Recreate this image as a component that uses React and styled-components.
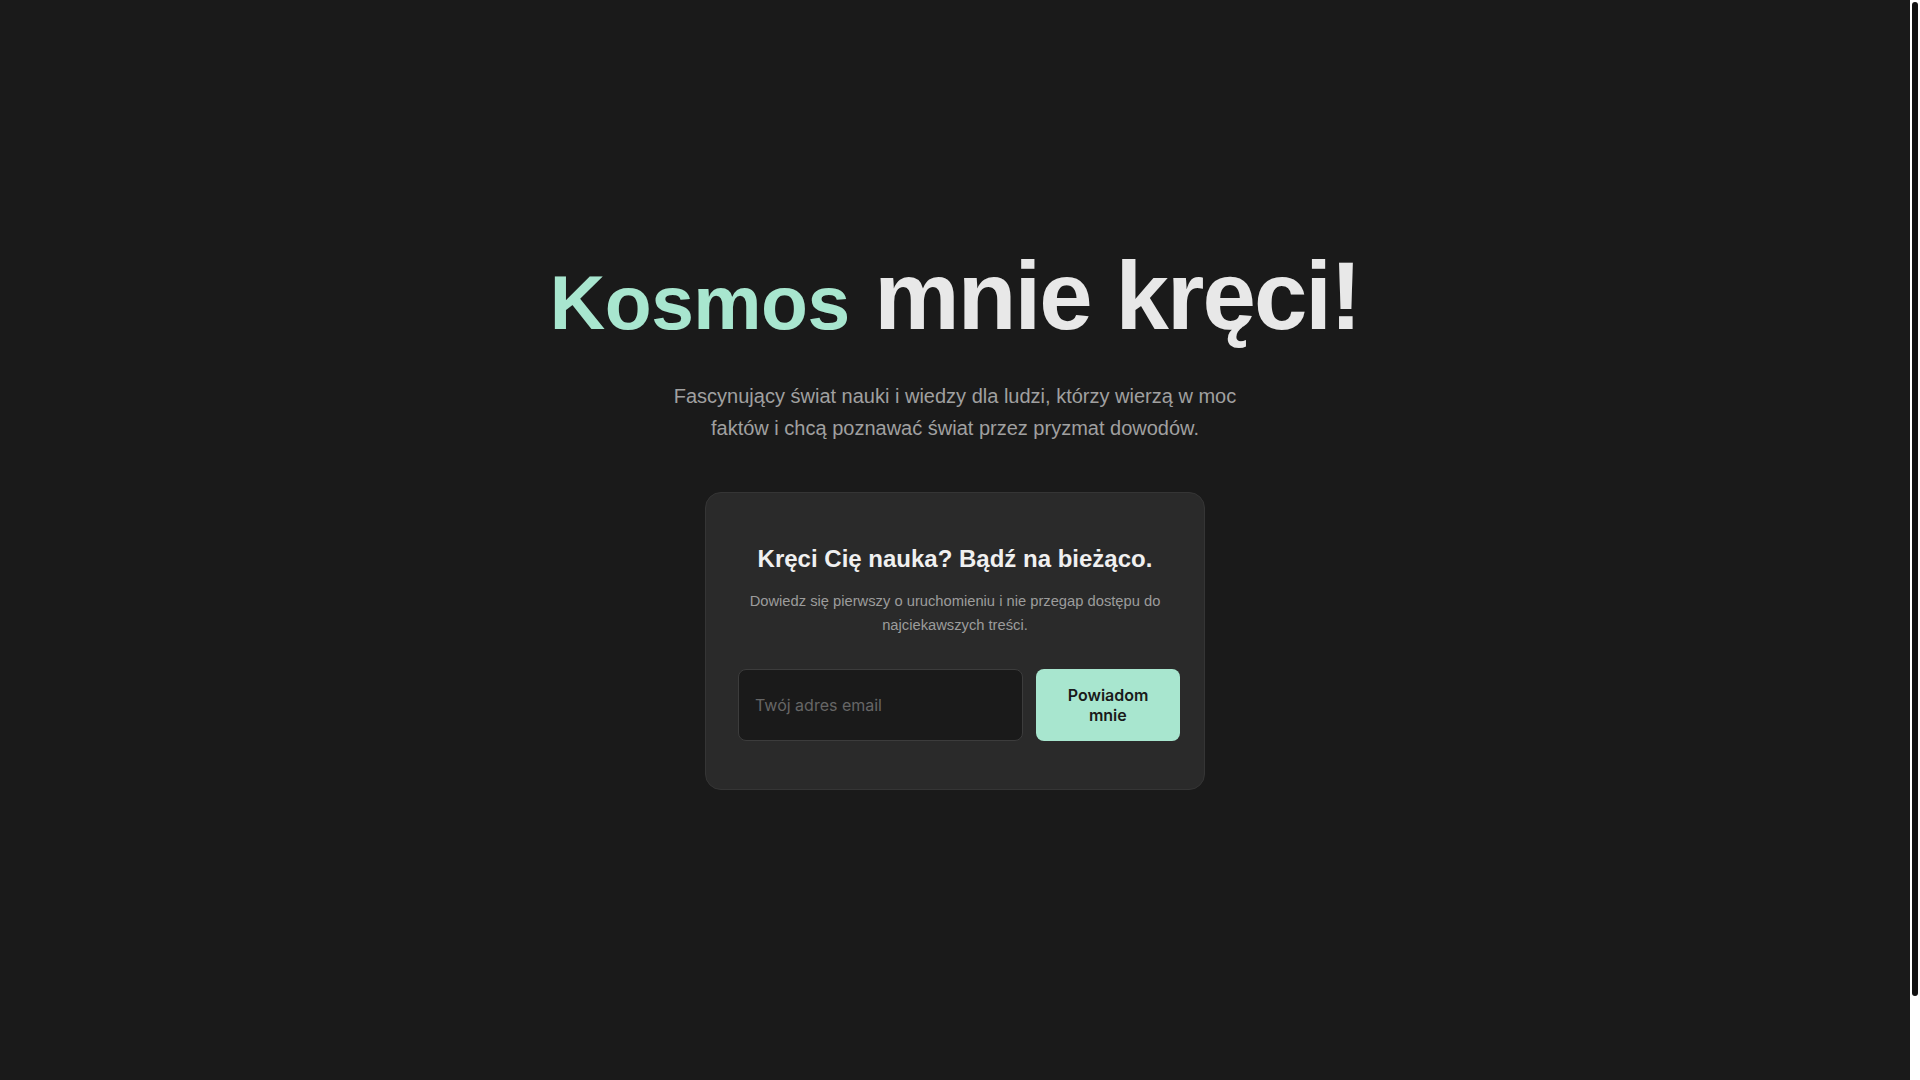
import React from "react";
import styled, { createGlobalStyle } from "styled-components";

const GlobalStyle = createGlobalStyle`
  * { box-sizing: border-box; }
  html, body { margin: 0; padding: 0; background: #1a1a1a; }
  body {
    font-family: "Liberation Sans", Arial, sans-serif;
    color: #e8e8e8;
  }
  ::-webkit-scrollbar { width: 0; }
`;

const Page = styled.main`
  box-sizing: content-box;
  min-height: 100vh;
  padding: 48px 34px 48px 24px;
  display: flex;
  flex-direction: column;
  align-items: center;
`;

const ScrollTrack = styled.div`
  position: fixed;
  top: 0;
  right: 0;
  width: 10px;
  height: 100vh;
  background: #ffffff;
  padding: 2px;
`;

const ScrollThumb = styled.div`
  width: 6px;
  height: 994px;
  background: #111111;
  border-radius: 3px;
`;

const Hero = styled.section`
  padding-top: 188px;
  display: flex;
  flex-direction: column;
  align-items: center;
  text-align: center;
`;

const Title = styled.h1`
  margin: 0 0 24px;
  font-size: 96px;
  font-weight: 700;
  line-height: 1.25;
  letter-spacing: -0.02em;
  color: #e8e8e8;
  white-space: nowrap;
`;

const Accent = styled.span`
  font-size: 0.8em;
  letter-spacing: -0.007em;
  color: #a8e6cf;
`;

const Lead = styled.p`
  margin: 0 0 48px;
  max-width: 600px;
  font-size: 20px;
  line-height: 1.6;
  color: #a0a0a0;
`;

const Card = styled.div`
  width: 500px;
  padding: 48px 32px;
  background: #2a2a2a;
  border: 1px solid #353535;
  border-radius: 16px;
  text-align: center;
`;

const CardTitle = styled.h2`
  margin: 0 0 12px;
  font-size: 24px;
  font-weight: 700;
  line-height: 1.5;
  color: #f0f0f0;
`;

const CardText = styled.p`
  margin: 0 0 32px;
  font-size: 14.72px;
  line-height: 24px;
  color: #9c9c9c;
`;

const Form = styled.form`
  display: flex;
  gap: 12.8px;
  align-items: stretch;
`;

const EmailInput = styled.input`
  flex: 0 0 285px;
  width: 285px;
  padding: 16px;
  font-family: Inter, "Noto Sans", sans-serif;
  font-size: 16px;
  color: #e8e8e8;
  background: #1a1a1a;
  border: 1px solid #3c3c3c;
  border-radius: 8px;
  outline: none;
  &::placeholder { color: #666666; }
`;

const SubmitButton = styled.button`
  flex: 0 0 144px;
  width: 144px;
  padding: 16px 32px;
  font-family: Inter, "Noto Sans", sans-serif;
  font-size: 16px;
  font-weight: 600;
  color: #1a1a1a;
  background: #a8e6cf;
  border: none;
  border-radius: 8px;
  cursor: pointer;
`;

export default function App() {
  return (
    <>
      <GlobalStyle />
      <Page>
        <Hero>
          <Title>
            <Accent>Kosmos</Accent> mnie kręci!
          </Title>
          <Lead>
            Fascynujący świat nauki i wiedzy dla ludzi, którzy wierzą w moc
            faktów i chcą poznawać świat przez pryzmat dowodów.
          </Lead>
          <Card>
            <CardTitle>Kręci Cię nauka? Bądź na bieżąco.</CardTitle>
            <CardText>
              Dowiedz się pierwszy o uruchomieniu i nie przegap dostępu do
              najciekawszych treści.
            </CardText>
            <Form onSubmit={(e) => e.preventDefault()}>
              <EmailInput type="email" placeholder="Twój adres email" />
              <SubmitButton type="submit">Powiadom mnie</SubmitButton>
            </Form>
          </Card>
        </Hero>
      </Page>
      <ScrollTrack aria-hidden="true">
        <ScrollThumb />
      </ScrollTrack>
    </>
  );
}
